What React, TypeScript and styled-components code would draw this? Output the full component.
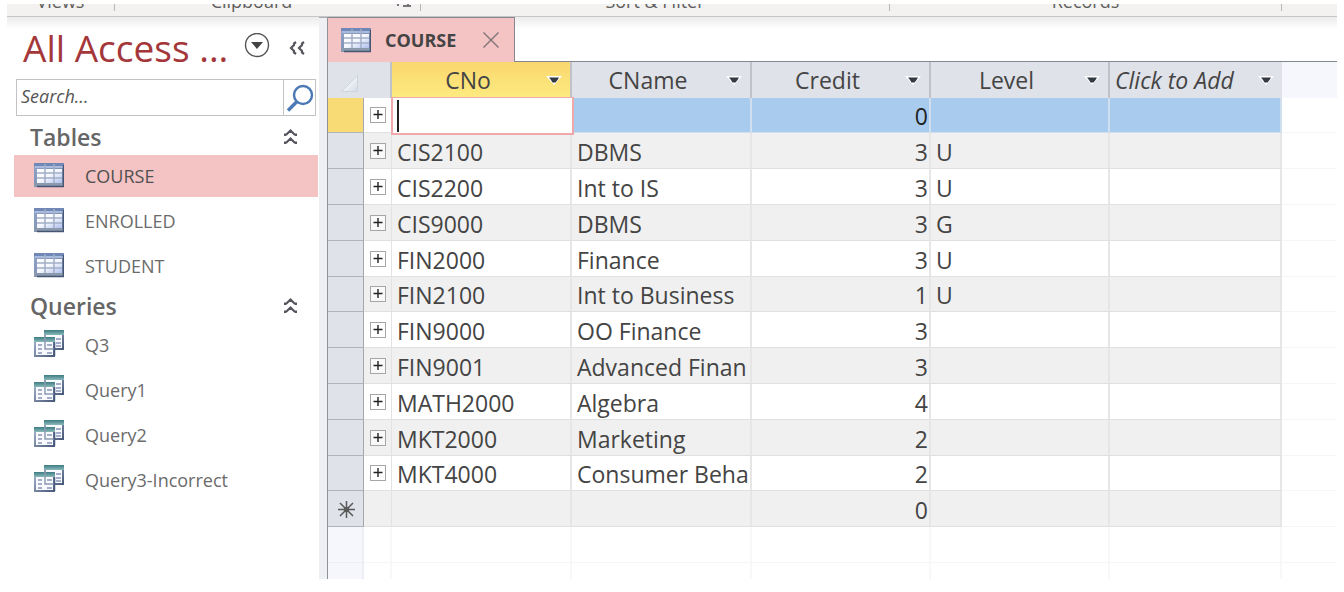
import React from "react";
import styled, { createGlobalStyle, css } from "styled-components";

const GlobalStyle = createGlobalStyle`
  *, *::before, *::after { box-sizing: border-box; }
  body { margin: 0; background: #fff; font-family: "Open Sans", "Noto Sans", sans-serif; color: #444; }
  button, input { font: inherit; color: inherit; border: 0; padding: 0; margin: 0; background: none; border-radius: 0; }
  button { cursor: pointer; }
  svg { display: block; flex: none; }
`;

const Page = styled.div`
  padding: 4px 7px 12px;
`;

const Ribbon = styled.div`
  display: flex;
  align-items: flex-end;
  height: 13px;
  overflow: hidden;
  background: #f3f2f1;
  border-bottom: 1px solid #c6c6c6;
`;

const RibbonGroup = styled.div<{ $width: number }>`
  display: flex;
  align-items: flex-end;
  flex: 0 1 ${(p) => p.$width}px;
  height: 12px;
  padding-bottom: 5px;
`;

const RibbonLabel = styled.span`
  flex: 1;
  text-align: center;
  font-size: 18px;
  line-height: 20px;
  color: #605e5c;
  white-space: nowrap;
`;

const RibbonDivider = styled.span`
  width: 1px;
  height: 7px;
  background: #b8b6b4;
`;

const Launcher = styled.button`
  display: flex;
  justify-content: flex-end;
  width: 32px;
  height: 7px;
  padding-right: 7px;
`;

const Workspace = styled.div`
  display: flex;
`;

const shade = css`
  background: linear-gradient(#ececec, #fff 12px);
`;

const Sidebar = styled.nav`
  flex: none;
  width: 312px;
  ${shade}
`;

const SidebarHeader = styled.div`
  display: flex;
  align-items: center;
  gap: 8px;
  height: 62px;
  padding: 0 6px 0 16px;
`;

const Title = styled.h1`
  flex: 1;
  margin: 0;
  font-size: 37px;
  font-weight: 400;
  line-height: 48px;
  color: #a4373a;
  white-space: nowrap;
`;

const IconButton = styled.button`
  display: flex;
  align-items: center;
  justify-content: center;
  width: 32px;
  height: 32px;
`;

const SearchBox = styled.form`
  display: flex;
  height: 37px;
  margin: 0 3px 2px 9px;
  border: 1px solid #c3c3c3;
`;

const SearchInput = styled.input`
  flex: 1;
  min-width: 0;
  padding: 0 4px 4px;
  font-size: 18px;
  outline: none;
  &::placeholder { color: #555; font-style: italic; opacity: 1; }
`;

const SearchButton = styled.button`
  display: flex;
  align-items: center;
  justify-content: center;
  width: 32px;
  border-left: 1px solid #c3c3c3;
`;

const GroupHeader = styled.button`
  display: flex;
  align-items: center;
  justify-content: space-between;
  width: 100%;
  height: 37px;
  padding: 0 22px 0 23px;
  font-size: 23px;
  font-weight: 600;
  line-height: 32px;
  color: #666;
`;

const ItemList = styled.ul`
  display: grid;
  gap: 3px;
  margin: 0;
  padding: 0 1px 0 7px;
  list-style: none;
`;

const Item = styled.li`
  display: block;
`;

const ItemButton = styled.button<{ $active?: boolean }>`
  display: flex;
  align-items: center;
  gap: 21px;
  width: 100%;
  height: 42px;
  padding: 0 20px;
  font-size: 18px;
  line-height: 24px;
  text-align: left;
  color: ${(p) => (p.$active ? "#505050" : "#6b6b6b")};
  background: ${(p) => (p.$active ? "#f4c3c4" : "transparent")};
`;

const IconSlot = styled.span`
  padding-bottom: 2px;
`;

const Splitter = styled.div`
  flex: none;
  width: 9px;
  background: #eff0f3;
  border-right: 1px solid #8d9298;
  border-top: 1px solid #a9adb2;
`;

const Main = styled.main`
  flex: 1;
  min-width: 0;
`;

const TabStrip = styled.div`
  display: flex;
  height: 45px;
  border-bottom: 1px solid #85898f;
  ${shade}
`;

const Tab = styled.div`
  display: flex;
  align-items: center;
  width: 187px;
  height: 45px;
  padding: 0 13px;
  background: #f4c3c4;
  border: solid #85898f;
  border-width: 1px 1px 0 0;
`;

const TabName = styled.span`
  flex: 1;
  padding-left: 14px;
  font-size: 18px;
  font-weight: 700;
  line-height: 24px;
`;

const CloseButton = styled.button`
  display: flex;
  align-items: center;
  justify-content: center;
  width: 20px;
  height: 24px;
`;

const Sheet = styled.table`
  width: 100%;
  table-layout: fixed;
  border-collapse: separate;
  border-spacing: 0;
  font-size: 23px;
  line-height: 30px;
`;

const Column = styled.col<{ $width?: number }>`
  width: ${(p) => (p.$width ? `${p.$width}px` : "auto")};
`;

const HeadCell = styled.th<{ $current?: boolean; $plain?: boolean }>`
  height: 36px;
  padding: 0;
  font-weight: 400;
  background: ${(p) => (p.$current ? "linear-gradient(#f9d76e, #fdeb80)" : "#dfe2e8")};
  border-right: ${(p) => (p.$plain ? "0" : "2px solid #bfc2c8")};
`;

const HeadFiller = styled.td`
  padding: 0;
  background: #f5f7fd;
`;

const HeadContent = styled.div`
  display: flex;
  align-items: center;
  padding-right: 6px;
  white-space: nowrap;
`;

const HeadLabel = styled.span<{ $add?: boolean }>`
  flex: 1;
  text-align: center;
  ${(p) =>
    p.$add &&
    css`
      padding-left: 5px;
      text-align: left;
      font-style: italic;
    `}
`;

const MenuButton = styled.button`
  display: flex;
  align-items: center;
  justify-content: center;
  width: 20px;
  height: 30px;
`;

const Corner = styled.div`
  padding: 6px 0 0 13px;
`;

const Cell = styled.td<{ $number?: boolean }>`
  padding: 2px 1px 0 5px;
  overflow: hidden;
  white-space: nowrap;
  text-align: ${(p) => (p.$number ? "right" : "left")};
  border-right: 2px solid #e6e6e6;
  border-bottom: 1px solid #e0e0e0;
`;

const Selector = styled.th<{ $current?: boolean }>`
  padding: 0;
  background: ${(p) => (p.$current ? "#f8db75" : "#dfe2e8")};
  border-right: 1px solid #a4a8ae;
  border-bottom: 1px solid #b0b4ba;
`;

const ExpandCell = styled.td`
  padding: 0;
  border-right: 1px solid #e3e3e3;
  border-bottom: 1px solid #e0e0e0;
`;

const ExpandButton = styled.button`
  display: block;
  width: 16px;
  height: 16px;
  margin: 0 auto;
`;

const Outside = styled.td`
  padding: 0;
  background: #fff;
  border-bottom: 1px solid #f6f6f6;
`;

const Row = styled.tr<{ $current?: boolean }>`
  height: 36px;
  &:nth-child(5n + 1) { height: 35px; }
  &:nth-child(even) { background: #f0f0f0; }
  ${(p) =>
    p.$current &&
    css`
      ${Cell} { background: #a9ccee; border-color: #cfdfee; color: #222; }
    `}
`;

const EditCell = styled.td`
  position: relative;
  padding: 0;
`;

const Editor = styled.input`
  position: absolute;
  inset: -1px -2px -2px -1px;
  width: 183px;
  padding: 0 6px;
  background: #fff;
  border: 2px solid #efa9ab;
  border-top-width: 1px;
  outline: none;
`;

const Caret = styled.span`
  position: absolute;
  left: 5px;
  top: 2px;
  bottom: 1px;
  width: 2px;
  background: #222;
`;

const BlankRow = styled.tr<{ $height: number }>`
  height: ${(p) => p.$height}px;
  td { padding: 0; border-right: 2px solid #f8f8f8; border-bottom: 1px solid #f5f5f5; }
  td:first-child { background: #f5f7fd; border-color: #eceef3; }
  td:last-child { border-right: 0; }
  &:last-child td { border-bottom: 0; }
`;

const TableIcon = () => (
  <svg width="30" height="25" viewBox="0 0 30 25" aria-hidden="true">
    <defs>
      <linearGradient id="frame" x1="0" y1="0" x2="1" y2="1">
        <stop offset="0" stopColor="#93a5c9" />
        <stop offset="1" stopColor="#6f83a4" />
      </linearGradient>
      <linearGradient id="cells" x1="0" y1="0" x2="1" y2="1">
        <stop offset="0" stopColor="#ffffff" />
        <stop offset=".5" stopColor="#f4f7fe" />
        <stop offset="1" stopColor="#aebfee" />
      </linearGradient>
    </defs>
    <rect width="30" height="24" fill="url(#frame)" />
    <rect x="3" y="6" width="25" height="14" fill="url(#cells)" />
    <path d="M0 1.5h30" stroke="#7187b5" strokeWidth="3" />
    <path d="M1 4h28" stroke="#a9bbdf" strokeWidth="2" />
    <path d="M11 1v19M20 1v19M3 10h25M3 15h25" stroke="#a2aec6" strokeWidth="1.5" />
    <path d="M0 20h29v3H0z" fill="#8a99ab" />
    <path d="M3 23.5h27M29.5 2v22" stroke="#445674" strokeWidth="1.5" />
  </svg>
);

const QueryIcon = () => (
  <svg width="30" height="28" viewBox="0 0 30 28" aria-hidden="true">
    <defs>
      <linearGradient id="bar" x1="0" y1="0" x2="0" y2="1">
        <stop offset="0" stopColor="#3d7c83" />
        <stop offset="1" stopColor="#8bb9ba" />
      </linearGradient>
      <linearGradient id="edge" x1="0" y1="0" x2="1" y2="1">
        <stop offset="0" stopColor="#a5b4c8" />
        <stop offset="1" stopColor="#495a7b" />
      </linearGradient>
    </defs>
    <rect x="11" y="1" width="18" height="18" fill="#f8faff" stroke="url(#edge)" strokeWidth="2" />
    <rect x="10" y="0" width="20" height="5" fill="url(#bar)" />
    <path d="M22 9h5M22 13h5M22 16h5" stroke="#8995b8" strokeWidth="1.5" />
    <rect x="1" y="8" width="19" height="18" fill="#f8faff" stroke="url(#edge)" strokeWidth="2" />
    <rect x="0" y="7" width="21" height="5" fill="url(#bar)" />
    <path d="M11 5v14h10" fill="none" stroke="#8d9ab2" strokeWidth="1.5" />
    <path d="M20.5 12v14" stroke="#485b7c" strokeWidth="1.5" />
    <path d="M4 15h4M4 19h4M4 23h4M13 15h5M13 23h5" stroke="#8995b8" strokeWidth="1.5" />
  </svg>
);

const CircleArrowIcon = () => (
  <svg width="26" height="30" viewBox="0 0 26 30" aria-hidden="true">
    <circle cx="13" cy="12" r="11.5" fill="none" stroke="#555" strokeWidth="1.4" />
    <path d="M7 9h12l-6 7z" fill="#444" />
  </svg>
);

const CollapseLeftIcon = () => (
  <svg width="16" height="14" viewBox="0 0 16 14" fill="none" stroke="#55555d" strokeWidth="2.2" aria-hidden="true">
    <path d="M7 1L5 2.500V4L2 7l3 3v1.500L7 13M15 1l-2 1.500V4l-3 3 3 3v1.500l2 1.500" />
  </svg>
);

const CollapseUpIcon = () => (
  <svg width="13" height="16" viewBox="0 0 13 16" fill="none" stroke="#55555d" strokeWidth="2.2" aria-hidden="true">
    <path d="M1 7V5.500h1.500l4-4 4 4H12V7M1 15v-1.500h1.500l4-4 4 4H12V15" />
  </svg>
);

const SearchIcon = () => (
  <svg width="28" height="28" viewBox="0 0 28 28" fill="none" stroke="#4a79b5" aria-hidden="true">
    <circle cx="17" cy="11" r="9" strokeWidth="2.4" />
    <path d="M10.500 18L2 26.500" strokeWidth="3.400" />
  </svg>
);

const CloseIcon = () => (
  <svg width="16" height="16" viewBox="0 0 16 16" stroke="#7e7476" strokeWidth="1.4" aria-hidden="true">
    <path d="M.5.5l15 15M15.500.5l-15 15" />
  </svg>
);

const MenuArrowIcon = () => (
  <svg width="16" height="9" viewBox="0 0 16 9" aria-hidden="true">
    <path d="M0 0h16L8 9z" fill="#fff" />
    <path d="M3 1.500h10L11.500 4 9.500 6.500h-3L5 4z" fill="#333a44" />
  </svg>
);

const CornerIcon = () => (
  <svg width="17" height="17" viewBox="0 0 17 17" aria-hidden="true">
    <defs>
      <linearGradient id="corner" x1="0" y1="0" x2="1" y2="1">
        <stop offset=".4" stopColor="#f5f7fa" />
        <stop offset="1" stopColor="#d2dae6" />
      </linearGradient>
    </defs>
    <path d="M16.500.5v16H.5z" fill="url(#corner)" stroke="#cdd4de" strokeWidth="1" />
  </svg>
);

const PlusBoxIcon = () => (
  <svg width="16" height="16" viewBox="0 0 16 16" fill="none" aria-hidden="true">
    <rect x=".5" y=".5" width="15" height="15" fill="#fff" fillOpacity=".6" stroke="#a6a6a6" />
    <path d="M3.500 7.500h9M8 3v9" stroke="#222" strokeWidth="1.400" />
  </svg>
);

const NewRecordIcon = () => (
  <svg width="17" height="17" viewBox="0 0 17 17" stroke="#5a5a5a" strokeWidth="1.500" aria-hidden="true">
    <path d="M8.500 0v17M0 8.500h17M2 2l13 13M15 2L2 15" />
    <circle cx="8.500" cy="8.500" r="2" fill="#5a5a5a" />
  </svg>
);

const LauncherIcon = () => (
  <svg width="16" height="6" viewBox="0 0 16 6" aria-hidden="true">
    <path d="M1 0v2M6 2h8M11 0v3" stroke="#77757a" strokeWidth="2" />
  </svg>
);

const ribbonGroups = [
  { name: "Views", width: 108 },
  { name: "Clipboard", width: 306, launcher: true },
  { name: "Sort & Filter", width: 469 },
  { name: "Records", width: 392 },
];

const columns = ["CNo", "CName", "Credit", "Level"];

const records = [
  ["CIS2100", "DBMS", "3", "U"],
  ["CIS2200", "Int to IS", "3", "U"],
  ["CIS9000", "DBMS", "3", "G"],
  ["FIN2000", "Finance", "3", "U"],
  ["FIN2100", "Int to Business", "1", "U"],
  ["FIN9000", "OO Finance", "3", ""],
  ["FIN9001", "Advanced Finan", "3", ""],
  ["MATH2000", "Algebra", "4", ""],
  ["MKT2000", "Marketing", "2", ""],
  ["MKT4000", "Consumer Beha", "2", ""],
];

const NavGroup = ({ name, items, icon, active }: { name: string; items: string[]; icon: React.ReactNode; active?: string }) => (
  <section>
    <GroupHeader type="button" aria-expanded="true">
      {name}
      <CollapseUpIcon />
    </GroupHeader>
    <ItemList>
      {items.map((item) => (
        <Item key={item}>
          <ItemButton type="button" $active={item === active}>
            <IconSlot>{icon}</IconSlot>
            {item}
          </ItemButton>
        </Item>
      ))}
    </ItemList>
  </section>
);

const Expander = ({ label }: { label: string }) => (
  <ExpandCell>
    <ExpandButton type="button" aria-label={label}>
      <PlusBoxIcon />
    </ExpandButton>
  </ExpandCell>
);

const Datasheet = () => (
  <Sheet>
    <colgroup>
      <Column $width={36} />
      <Column $width={28} />
      <Column $width={180} />
      <Column $width={180} />
      <Column $width={179} />
      <Column $width={179} />
      <Column $width={172} />
      <Column />
    </colgroup>
    <thead>
      <tr>
        <HeadCell colSpan={2} aria-label="Select all">
          <Corner>
            <CornerIcon />
          </Corner>
        </HeadCell>
        {columns.map((name) => (
          <HeadCell key={name} scope="col" $current={name === "CNo"}>
            <HeadContent>
              <HeadLabel>{name}</HeadLabel>
              <MenuButton type="button" aria-label={`${name} options`}>
                <MenuArrowIcon />
              </MenuButton>
            </HeadContent>
          </HeadCell>
        ))}
        <HeadCell scope="col" $plain>
          <HeadContent>
            <HeadLabel $add>Click to Add</HeadLabel>
            <MenuButton type="button" aria-label="Field types">
              <MenuArrowIcon />
            </MenuButton>
          </HeadContent>
        </HeadCell>
        <HeadFiller />
      </tr>
    </thead>
    <tbody>
      <Row $current>
        <Selector scope="row" $current />
        <Expander label="Expand current record" />
        <EditCell>
          <Editor aria-label="CNo" />
          <Caret />
        </EditCell>
        <Cell />
        <Cell $number>0</Cell>
        <Cell />
        <Cell />
        <Outside />
      </Row>
      {records.map(([no, name, credit, level]) => (
        <Row key={no}>
          <Selector scope="row" />
          <Expander label={`Expand ${no}`} />
          <Cell>{no}</Cell>
          <Cell>{name}</Cell>
          <Cell $number>{credit}</Cell>
          <Cell>{level}</Cell>
          <Cell />
          <Outside />
        </Row>
      ))}
      <Row>
        <Selector scope="row" aria-label="New record">
          <ExpandButton as="span">
            <NewRecordIcon />
          </ExpandButton>
        </Selector>
        <ExpandCell />
        <Cell />
        <Cell />
        <Cell $number>0</Cell>
        <Cell />
        <Cell />
        <Outside />
      </Row>
      {[36, 16].map((height) => (
        <BlankRow key={height} $height={height}>
          {Array.from({ length: 8 }, (_, n) => (
            <td key={n} />
          ))}
        </BlankRow>
      ))}
    </tbody>
  </Sheet>
);

export default function App() {
  return (
    <Page>
      <GlobalStyle />
      <Ribbon>
        {ribbonGroups.map((group) => (
          <RibbonGroup key={group.name} $width={group.width}>
            <RibbonLabel>{group.name}</RibbonLabel>
            {group.launcher && (
              <Launcher type="button" aria-label="Clipboard settings">
                <LauncherIcon />
              </Launcher>
            )}
            <RibbonDivider />
          </RibbonGroup>
        ))}
      </Ribbon>
      <Workspace>
        <Sidebar>
          <SidebarHeader>
            <Title>All Access ...</Title>
            <IconButton type="button" aria-label="Choose category">
              <CircleArrowIcon />
            </IconButton>
            <IconButton type="button" aria-label="Collapse pane">
              <CollapseLeftIcon />
            </IconButton>
          </SidebarHeader>
          <SearchBox role="search" onSubmit={(e) => e.preventDefault()}>
            <SearchInput aria-label="Search" placeholder="Search..." />
            <SearchButton aria-label="Search">
              <SearchIcon />
            </SearchButton>
          </SearchBox>
          <NavGroup name="Tables" items={["COURSE", "ENROLLED", "STUDENT"]} icon={<TableIcon />} active="COURSE" />
          <NavGroup name="Queries" items={["Q3", "Query1", "Query2", "Query3-Incorrect"]} icon={<QueryIcon />} />
        </Sidebar>
        <Splitter />
        <Main>
          <TabStrip>
            <Tab>
              <TableIcon />
              <TabName>COURSE</TabName>
              <CloseButton type="button" aria-label="Close COURSE">
                <CloseIcon />
              </CloseButton>
            </Tab>
          </TabStrip>
          <Datasheet />
        </Main>
      </Workspace>
    </Page>
  );
}
